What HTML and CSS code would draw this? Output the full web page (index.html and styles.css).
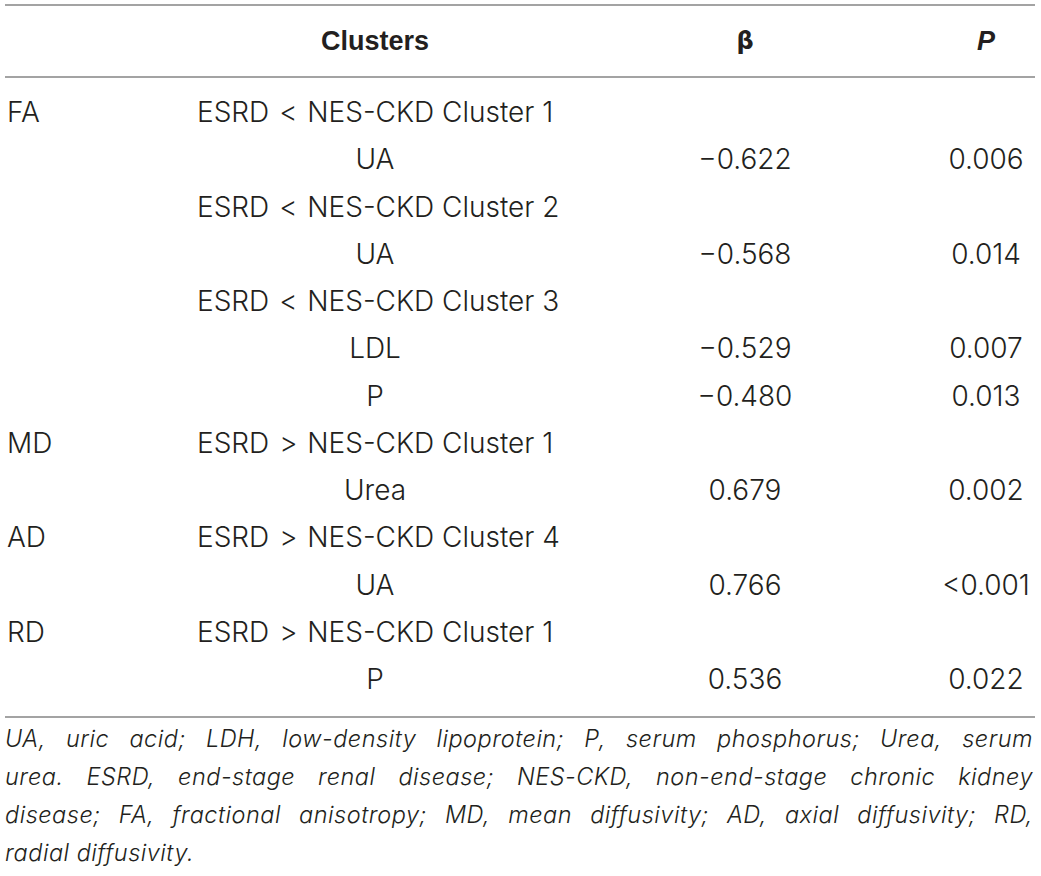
FILE: index.html
```html
<!DOCTYPE html>
<html>
<head>
<meta charset="utf-8">
<link rel="stylesheet" href="styles.css">
</head>
<body>
<div class="wrap">
<table class="tbl">
<colgroup><col class="c1"><col class="c2"><col class="c3"><col class="c4"></colgroup>
<thead>
<tr><th></th><th>Clusters</th><th class="beta">β</th><th><i>P</i></th></tr>
</thead>
<tbody>
<tr class="first"><td class="lab">FA</td><td>ESRD <span class="op">&lt;</span> NES-CKD Cluster 1</td><td></td><td></td></tr>
<tr><td></td><td>UA</td><td>−0.622</td><td>0.006</td></tr>
<tr><td></td><td>ESRD <span class="op">&lt;</span> NES-CKD Cluster 2</td><td></td><td></td></tr>
<tr><td></td><td>UA</td><td>−0.568</td><td>0.014</td></tr>
<tr><td></td><td>ESRD <span class="op">&lt;</span> NES-CKD Cluster 3</td><td></td><td></td></tr>
<tr><td></td><td>LDL</td><td>−0.529</td><td>0.007</td></tr>
<tr><td></td><td>P</td><td>−0.480</td><td>0.013</td></tr>
<tr><td class="lab">MD</td><td>ESRD <span class="op">&gt;</span> NES-CKD Cluster 1</td><td></td><td></td></tr>
<tr><td></td><td>Urea</td><td>0.679</td><td>0.002</td></tr>
<tr><td class="lab">AD</td><td>ESRD <span class="op">&gt;</span> NES-CKD Cluster 4</td><td></td><td></td></tr>
<tr><td></td><td>UA</td><td>0.766</td><td>&lt;0.001</td></tr>
<tr><td class="lab">RD</td><td>ESRD <span class="op">&gt;</span> NES-CKD Cluster 1</td><td></td><td></td></tr>
<tr class="last"><td></td><td>P</td><td>0.536</td><td>0.022</td></tr>
</tbody>
</table>
<div class="note">
<span class="ln">UA, uric acid; LDH, low-density lipoprotein; P, serum phosphorus; Urea, serum</span>
<span class="ln">urea. ESRD, end-stage renal disease; NES-CKD, non-end-stage chronic kidney</span>
<span class="ln">disease; FA, fractional anisotropy; MD, mean diffusivity; AD, axial diffusivity; RD,</span>
<span class="ln end">radial diffusivity.</span>
</div>
</div>
</body>
</html>
```
FILE: styles.css
```css
html, body {
  margin: 0;
  padding: 0;
  background: #ffffff;
}
.wrap {
  padding: 4px 0 0 5px;
  width: 1030px;
  font-family: Inter, "Liberation Sans", Arial, sans-serif;
  font-weight: 300;
  color: #231f20;
}
.tbl {
  width: 1030px;
  border-collapse: collapse;
  table-layout: fixed;
  font-size: 28px;
  line-height: 34px;
}
.c1 { width: 192px; }
.c2 { width: 356px; }
.c3 { width: 384px; }
.c4 { width: 98px; }
.tbl thead th {
  height: 70px;
  padding: 0;
  font-family: "Liberation Sans", Arial, sans-serif;
  font-weight: bold;
  text-align: center;
  border-top: 2px solid #a3a3a3;
  border-bottom: 2px solid #a3a3a3;
  font-size: 27px;
}
.tbl thead th.beta {
  font-family: "DejaVu Sans", sans-serif;
  font-weight: bold;
  font-size: 24px;
}
.tbl td {
  height: 47.25px;
  padding: 0;
  text-align: center;
  vertical-align: middle;
  white-space: nowrap;
}
.tbl td.lab {
  text-align: left;
  padding-left: 2px;
}
.tbl tr.first td {
  padding-top: 10.5px;
}
.tbl tr.last td {
  padding-bottom: 13.5px;
}
.tbl tbody tr.last td {
  border-bottom: 2px solid #a3a3a3;
}
.op {
  padding: 0 2px;
}
.note {
  padding-top: 2px;
  font-style: italic;
  font-size: 23.5px;
  letter-spacing: 0.5px;
  line-height: 38px;
  width: 1028px;
}
.ln {
  display: block;
  text-align: justify;
  text-align-last: justify;
}
.ln.end {
  text-align-last: left;
}
```
